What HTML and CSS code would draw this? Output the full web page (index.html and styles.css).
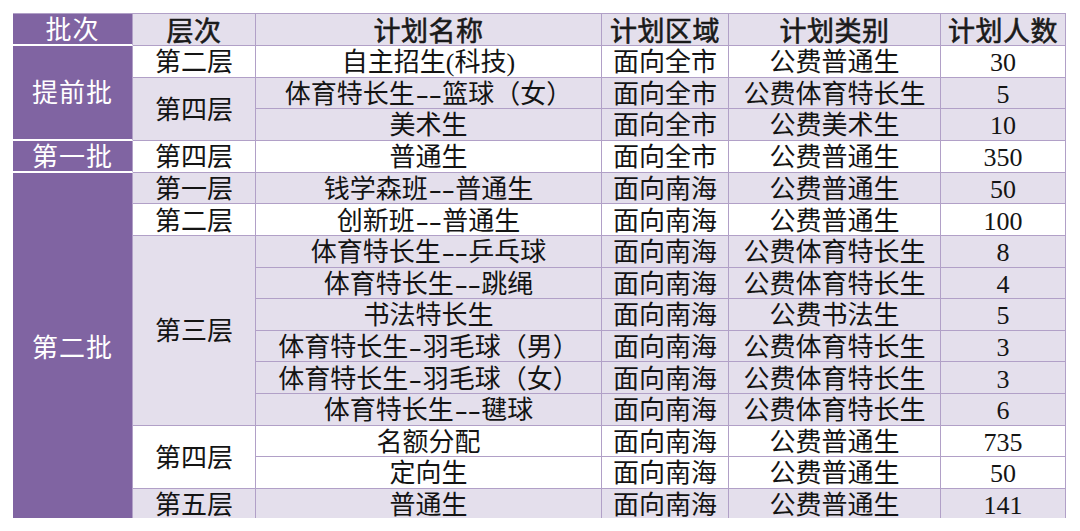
FILE: index.html
```html
<!DOCTYPE html>
<html lang="zh-CN">
<head>
<meta charset="utf-8">
<title>招生计划</title>
<link rel="stylesheet" href="styles.css">
</head>
<body>
<div class="sheet">
<table class="plan">
<colgroup>
<col class="c1"><col class="c2"><col class="c3"><col class="c4"><col class="c5"><col class="c6">
</colgroup>
<thead>
<tr class="head">
<th class="batch">批次</th><th>层次</th><th>计划名称</th><th>计划区域</th><th>计划类别</th><th>计划人数</th>
</tr>
</thead>
<tbody>
<tr class="w"><td class="batch" rowspan="3">提前批</td><td>第二层</td><td>自主招生(科技)</td><td>面向全市</td><td>公费普通生</td><td>30</td></tr>
<tr class="l"><td rowspan="2">第四层</td><td>体育特长生<span class="dash">--</span>篮球（女）</td><td>面向全市</td><td>公费体育特长生</td><td>5</td></tr>
<tr class="l"><td>美术生</td><td>面向全市</td><td>公费美术生</td><td>10</td></tr>
<tr class="w"><td class="batch">第一批</td><td>第四层</td><td>普通生</td><td>面向全市</td><td>公费普通生</td><td>350</td></tr>
<tr class="l"><td class="batch last" rowspan="11">第二批</td><td>第一层</td><td>钱学森班<span class="dash">--</span>普通生</td><td>面向南海</td><td>公费普通生</td><td>50</td></tr>
<tr class="w"><td>第二层</td><td>创新班<span class="dash">--</span>普通生</td><td>面向南海</td><td>公费普通生</td><td>100</td></tr>
<tr class="l"><td rowspan="6">第三层</td><td>体育特长生<span class="dash">--</span>乒乓球</td><td>面向南海</td><td>公费体育特长生</td><td>8</td></tr>
<tr class="l"><td>体育特长生<span class="dash">--</span>跳绳</td><td>面向南海</td><td>公费体育特长生</td><td>4</td></tr>
<tr class="l"><td>书法特长生</td><td>面向南海</td><td>公费书法生</td><td>5</td></tr>
<tr class="l"><td>体育特长生<span class="dash1">-</span>羽毛球（男）</td><td>面向南海</td><td>公费体育特长生</td><td>3</td></tr>
<tr class="l"><td>体育特长生<span class="dash1">-</span>羽毛球（女）</td><td>面向南海</td><td>公费体育特长生</td><td>3</td></tr>
<tr class="l"><td>体育特长生<span class="dash">--</span>毽球</td><td>面向南海</td><td>公费体育特长生</td><td>6</td></tr>
<tr class="w"><td rowspan="2">第四层</td><td>名额分配</td><td>面向南海</td><td>公费普通生</td><td>735</td></tr>
<tr class="w"><td>定向生</td><td>面向南海</td><td>公费普通生</td><td>50</td></tr>
<tr class="l"><td>第五层</td><td>普通生</td><td>面向南海</td><td>公费普通生</td><td>141</td></tr>
</tbody>
</table>
</div>
</body>
</html>
```
FILE: styles.css
```css
html, body {
  margin: 0;
  padding: 0;
  background: #ffffff;
}

body {
  padding: 13px 0 0 13px;
}

.sheet {
  width: 1053px;
  height: 505px;
  overflow: hidden;
}

.plan {
  table-layout: fixed;
  border-collapse: separate;
  border-spacing: 0;
  width: 1053px;
  border-top: 1px solid #b1a0c7;
  font-family: "Liberation Serif", "Noto Sans CJK SC", serif;
  font-size: 26px;
  color: #141414;
}

.c1 { width: 120px; }
.c2 { width: 123px; }
.c3 { width: 346px; }
.c4 { width: 127px; }
.c5 { width: 212px; }
.c6 { width: 125px; }

.plan th,
.plan td {
  padding: 4px 0 0 0;
  text-align: center;
  vertical-align: middle;
  line-height: 26px;
  white-space: nowrap;
  overflow: hidden;
  border-right: 1px solid #b1a0c7;
  border-bottom: 1px solid #b1a0c7;
}

.plan tr {
  height: 31.6px;
}

.plan tr.head {
  height: 31px;
}

.plan th {
  font-weight: 400;
  -webkit-text-stroke: 0.6px #1a1a1a;
  font-size: 27px;
  background: #e4dfec;
  color: #1a1a1a;
  letter-spacing: 0.5px;
}

.w td { background: #ffffff; }
.l td { background: #e4dfec; }

.dash {
  display: inline-block;
  transform: scaleX(1.5);
  margin: 0 5px;
}

.dash1 {
  display: inline-block;
  transform: scaleX(1.5);
  margin: 0 3px;
}

.plan th.batch,
.plan td.batch {
  background: #8064a2;
  color: #ffffff;
  -webkit-text-stroke: 0;
  border-bottom: 2px solid #ffffff;
  letter-spacing: 1px;
  font-size: 26px;
}

.plan td.batch.last {
  border-bottom: none;
}
```
